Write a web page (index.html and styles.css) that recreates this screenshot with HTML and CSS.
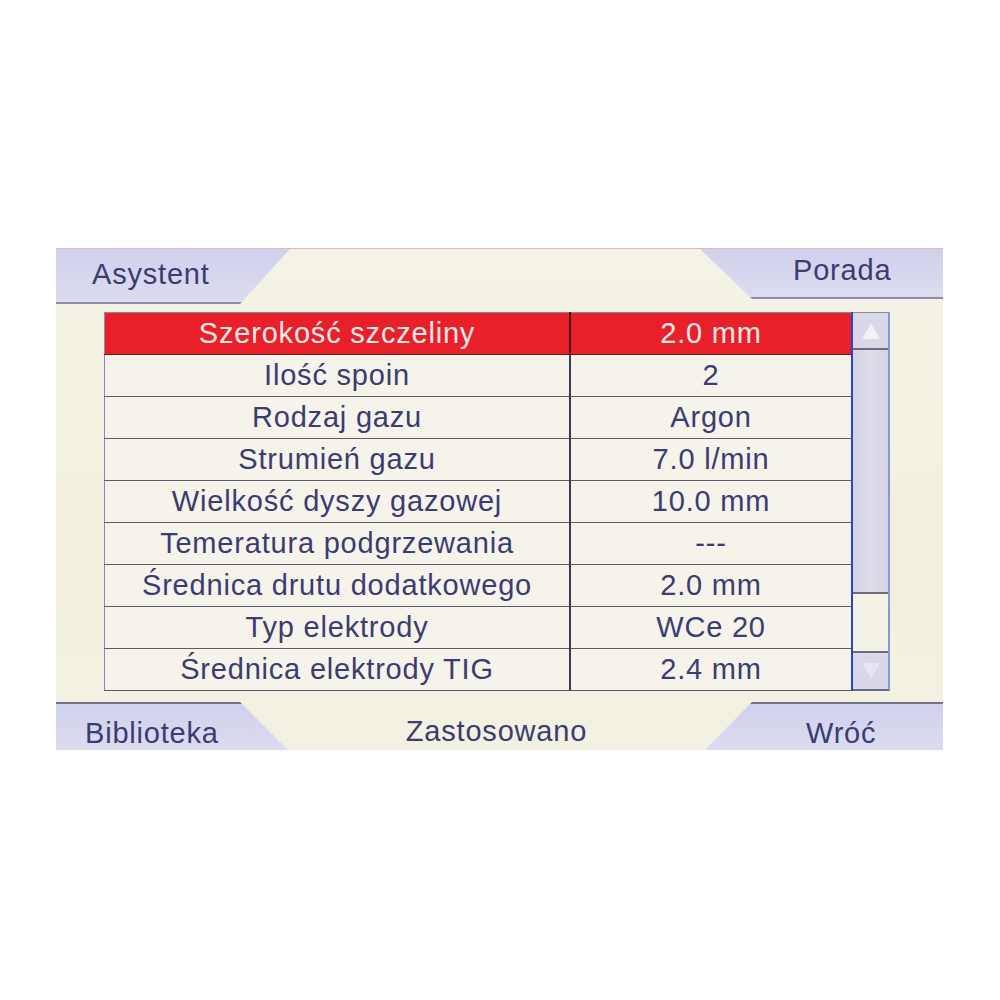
FILE: index.html
```html
<!DOCTYPE html>
<html lang="pl">
<head>
    <meta charset="UTF-8">
    <meta name="viewport" content="width=device-width, initial-scale=1.0">
    <title>Asystent spawania</title>
    <link rel="stylesheet" href="styles.css">
</head>
<body>

    <div class="screen">
        <div class="top-bar">
            <div class="tab tab-left-top">Asystent</div>
            <div class="tab tab-right-top">Porada</div>
        </div>

        <div class="list">
            <table class="params">
                <tr class="selected"><td>Szerokość szczeliny</td><td>2.0 mm</td></tr>
                <tr><td>Ilość spoin</td><td>2</td></tr>
                <tr><td>Rodzaj gazu</td><td>Argon</td></tr>
                <tr><td>Strumień gazu</td><td>7.0 l/min</td></tr>
                <tr><td>Wielkość dyszy gazowej</td><td>10.0 mm</td></tr>
                <tr><td>Temeratura podgrzewania</td><td>---</td></tr>
                <tr><td>Średnica drutu dodatkowego</td><td>2.0 mm</td></tr>
                <tr><td>Typ elektrody</td><td>WCe 20</td></tr>
                <tr><td>Średnica elektrody TIG</td><td>2.4 mm</td></tr>
            </table>
            <div class="scrollbar">
                <div class="arrow arrow-up"><span></span></div>
                <div class="thumb"></div>
                <div class="track"></div>
                <div class="arrow arrow-down"><span></span></div>
            </div>
        </div>

        <div class="bottom-bar">
            <div class="tab tab-left-bottom">Biblioteka</div>
            <div class="status">Zastosowano</div>
            <div class="tab tab-right-bottom">Wróć</div>
        </div>
    </div>

</body>
</html>
```

FILE: styles.css
```css
body {
    margin: 0;
    background: #fff;
    font-family: "Liberation Sans", Arial, sans-serif;
}
.screen {
    margin: 248px 0 0 56px;
    width: 887px;
    height: 502px;
    display: flex;
    flex-direction: column;
    background: linear-gradient(180deg, #f5f3e6 0%, #f2f0dc 60%, #f3f1e2 100%);
    border-top: 1px solid #e6b4bc;
    box-sizing: border-box;
    color: #3a3c72;
    font-size: 29px;
    letter-spacing: 0.8px;
}

/* zakładki */
.top-bar {
    display: flex;
    justify-content: space-between;
    align-items: flex-start;
    height: 63px;
}
.tab {
    background: linear-gradient(180deg, #cfd0ec 0%, #d6d6ee 50%, #dcdcf0 100%);
    display: flex;
    align-items: center;
    box-sizing: border-box;
}
.tab-left-top {
    width: 234px;
    height: 55px;
    padding-left: 36px;
    padding-bottom: 2px;
    border-bottom: 2px solid #8c8cae;
    clip-path: polygon(0 0, 100% 0, calc(100% - 50px) 100%, 0 100%);
}
.tab-right-top {
    width: 243px;
    height: 50px;
    padding-left: 93px;
    padding-bottom: 6px;
    border-bottom: 2px solid #8c8cae;
    clip-path: polygon(0 0, 100% 0, 100% 100%, 52px 100%, 0 0);
}

/* lista parametrów */
.list {
    display: flex;
    margin-left: 48px;
    height: 379px;
}
.params {
    width: 749px;
    border-collapse: collapse;
    table-layout: fixed;
    background: #f5f3ea;
    border-left: 1px solid #8a8cae;
}
.params td {
    height: 41px;
    padding: 0;
    text-align: center;
    border: 1px solid #5c5c6c;
    border-left: none;
    border-right: none;
    color: #3a3c72;
    white-space: nowrap;
}
.params td:first-child {
    width: 464px;
    border-right: 2px solid #3c3e58;
}
.params td:last-child {
    border-right: 2px solid #2846c8;
}
.params tr:first-child td {
    border-top: 1px solid #8a8a96;
}
.params .selected td {
    background: #e8202a;
    color: #fbe8e8;
    border-bottom: 1px solid #6a1e22;
}
.params .selected td:first-child {
    border-right: 2px solid #4a1418;
}

/* pasek przewijania */
.scrollbar {
    width: 37px;
    display: flex;
    flex-direction: column;
    border-top: 1px solid #8a8a96;
    border-bottom: 2px solid #6a6c86;
    border-right: 2px solid #8c96dc;
    box-sizing: border-box;
}
.arrow {
    background: #d8d8e8;
    display: flex;
    justify-content: center;
    align-items: center;
}
.arrow-up {
    height: 35px;
    border-bottom: 2px solid #6c6c7c;
}
.arrow-up span {
    width: 0;
    height: 0;
    border-left: 9px solid transparent;
    border-right: 9px solid transparent;
    border-bottom: 16px solid #f2f2f6;
}
.thumb {
    height: 242px;
    background: linear-gradient(90deg, #d2d2e2, #dcdcea 50%, #d2d2e2);
    border-bottom: 2px solid #6c6c7c;
}
.track {
    flex: 1;
    background: #f4f2e6;
    border-bottom: 2px solid #6c6c7c;
}
.arrow-down {
    height: 36px;
}
.arrow-down span {
    width: 0;
    height: 0;
    border-left: 9px solid transparent;
    border-right: 9px solid transparent;
    border-top: 16px solid #e6e6f0;
}

/* dolny pasek */
.bottom-bar {
    margin-top: auto;
    display: flex;
    align-items: flex-end;
    height: 48px;
}
.tab-left-bottom {
    width: 232px;
    height: 48px;
    padding-left: 29px;
    padding-top: 12px;
    border-top: 2px solid #707288;
    clip-path: polygon(0 0, 184px 0, 100% 100%, 0 100%);
}
.status {
    flex: 1;
    text-align: center;
    padding-bottom: 2px;
}
.tab-right-bottom {
    width: 238px;
    height: 48px;
    padding-left: 101px;
    padding-top: 12px;
    border-top: 2px solid #707288;
    clip-path: polygon(47px 0, 100% 0, 100% 100%, 0 100%);
}
```
